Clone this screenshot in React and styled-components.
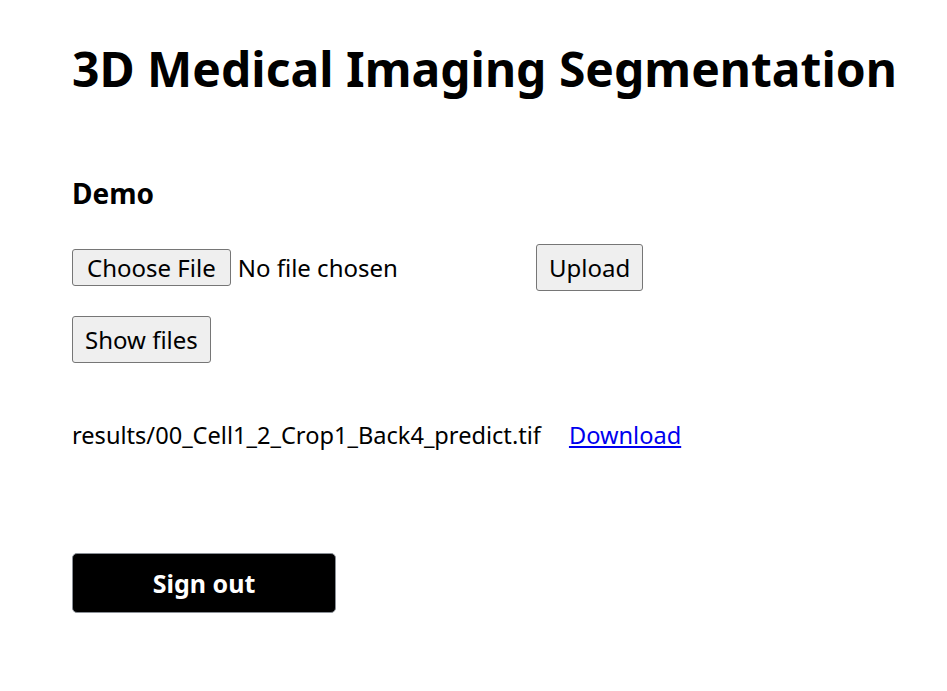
import styled, { createGlobalStyle } from "styled-components";

const Global = createGlobalStyle`
  body {
    margin: 0;
    background: #fff;
    font-family: "Noto Sans", "Open Sans", sans-serif;
    color: #000;
  }
`;

const Page = styled.div`
  padding: 28px 0 0 72px;
`;

const Title = styled.h1`
  margin: 0;
  font-size: 48px;
  font-weight: 700;
  line-height: 82px;
`;

const Section = styled.h3`
  margin: 66px 0 0;
  font-size: 28px;
  font-weight: 700;
  line-height: 34px;
`;

const UploadRow = styled.div`
  display: flex;
  align-items: center;
  margin-top: 34px;
  height: 47px;
`;

const FilePicker = styled.label`
  display: flex;
  align-items: center;
  width: 464px;
  font-size: 24px;
  input {
    display: none;
  }
`;

const Btn = styled.button`
  font-family: inherit;
  font-size: 24px;
  color: #000;
  background: #efefef;
  border: 1px solid #767676;
  border-radius: 3px;
  padding: 0 ${(p) => (p.$small ? "14px" : "12px")};
  height: ${(p) => (p.$small ? "37px" : "47px")};
  cursor: pointer;
`;

const FakeBtn = styled(Btn).attrs({ as: "span" })`
  display: inline-flex;
  align-items: center;
  box-sizing: border-box;
  margin-right: 7px;
`;

const ShowRow = styled.div`
  margin-top: 25px;
  height: 47px;
`;

const Result = styled.div`
  display: flex;
  align-items: center;
  gap: 28px;
  margin-top: 50px;
  font-size: 23.6px;
  line-height: 44px;
  a {
    color: #0000ee;
  }
`;

const SignOut = styled.button`
  display: block;
  margin-top: 96px;
  width: 264px;
  height: 60px;
  background: #000;
  color: #fff;
  border: 1px solid #8a8f96;
  border-radius: 5px;
  font-family: inherit;
  font-size: 25px;
  font-weight: 700;
  cursor: pointer;
`;

export default function App() {
  return (
    <>
      <Global />
      <Page>
        <Title>3D Medical Imaging Segmentation</Title>
        <Section>Demo</Section>
        <UploadRow>
          <FilePicker>
            <FakeBtn $small>Choose File</FakeBtn>
            No file chosen
            <input type="file" />
          </FilePicker>
          <Btn>Upload</Btn>
        </UploadRow>
        <ShowRow>
          <Btn>Show files</Btn>
        </ShowRow>
        <Result>
          <span>results/00_Cell1_2_Crop1_Back4_predict.tif</span>
          <a href="#">Download</a>
        </Result>
        <SignOut>Sign out</SignOut>
      </Page>
    </>
  );
}
